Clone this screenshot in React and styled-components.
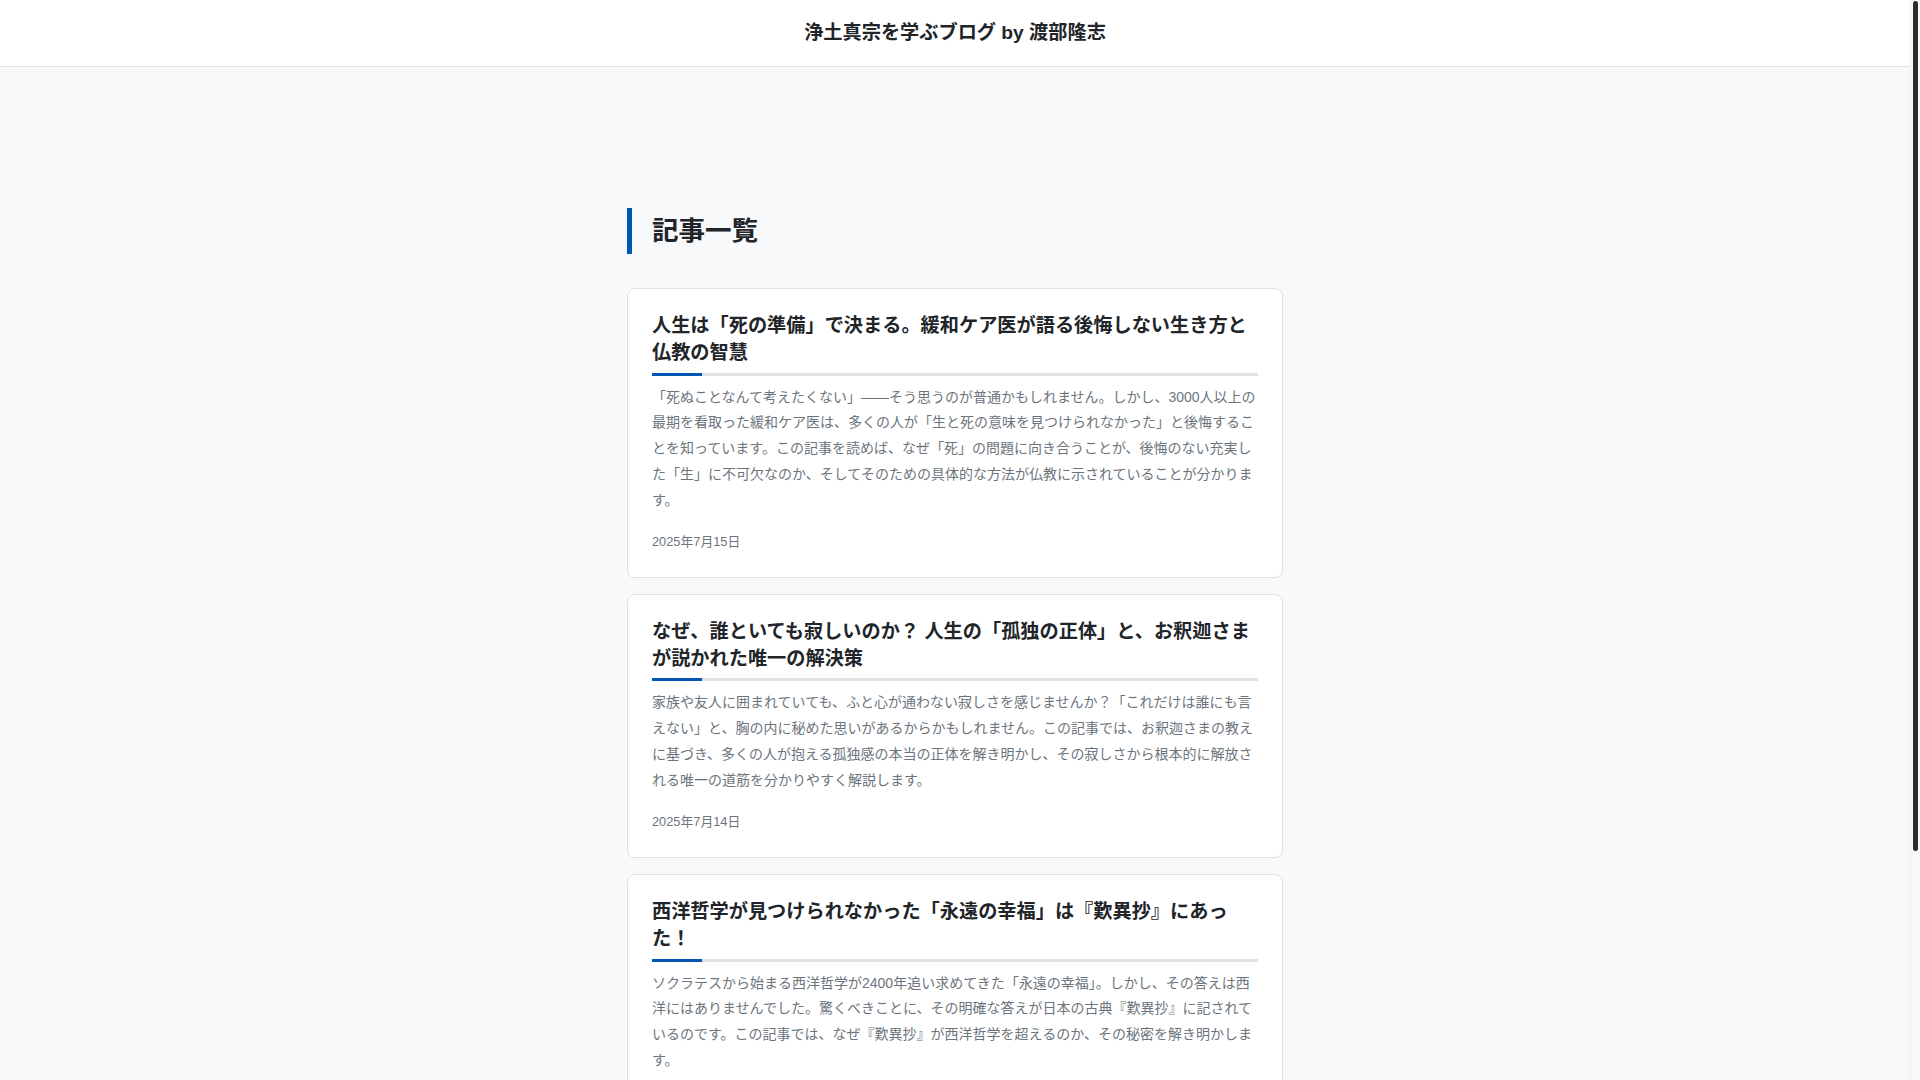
import React from "react";
import styled, { createGlobalStyle } from "styled-components";

const GlobalStyle = createGlobalStyle`
  html, body {
    margin: 0;
    padding: 0;
  }
  body {
    background: #f8f9fa;
    color: #212529;
    font-family: "Liberation Sans", "Noto Sans CJK JP", sans-serif;
  }
`;

const Page = styled.div`
  margin-right: 10px;
`;

const ScrollRail = styled.div`
  position: fixed;
  top: 0;
  right: 0;
  width: 10px;
  height: 100vh;
  background: #fafafa;
  border-left: 1px solid #ececec;
  box-sizing: border-box;
`;

const ScrollThumb = styled.div`
  margin: 1px 0 0 2px;
  width: 5px;
  height: 850px;
  border-radius: 3px;
  background: #2b2b2b;
`;

const Header = styled.header`
  background: #ffffff;
  border-bottom: 1px solid #dee2e6;
  padding: 16px 0;
  text-align: center;
`;

const SiteTitle = styled.h1`
  margin: 0;
  font-size: 19.2px;
  line-height: 34px;
  font-weight: 700;
  color: #212529;
`;

const Main = styled.main`
  width: 656px;
  margin: 0 auto;
  padding: 141px 0 120px;
`;

const SectionHeading = styled.h2`
  margin: 0 0 34px;
  border-left: 5px solid #0056b3;
  padding-left: 20px;
  font-size: 26.5px;
  line-height: 46px;
  font-weight: 700;
  color: #212529;
`;

const List = styled.div`
  display: flex;
  flex-direction: column;
  gap: 16px;
`;

const Card = styled.article`
  background: #ffffff;
  border: 1px solid #dee2e6;
  border-radius: 8px;
  padding: 24px;
`;

const CardTitle = styled.h3`
  position: relative;
  margin: 0 0 9px;
  padding-bottom: 6px;
  border-bottom: 3px solid #dee2e6;
  font-size: 19.2px;
  line-height: 1.4;
  font-weight: 700;
  color: #212529;

  &::after {
    content: "";
    position: absolute;
    left: 0;
    bottom: -3px;
    width: 50px;
    height: 3px;
    background: #0056b3;
  }
`;

const Excerpt = styled.p`
  margin: 0 0 19px;
  font-size: 14px;
  line-height: 25.7px;
  color: #6c757d;
`;

const DateText = styled.time`
  display: block;
  font-size: 12.8px;
  line-height: 1.6;
  color: #6c757d;
`;

const posts = [
  {
    title: "人生は「死の準備」で決まる。緩和ケア医が語る後悔しない生き方と仏教の智慧",
    excerpt:
      "「死ぬことなんて考えたくない」——そう思うのが普通かもしれません。しかし、3000人以上の最期を看取った緩和ケア医は、多くの人が「生と死の意味を見つけられなかった」と後悔することを知っています。この記事を読めば、なぜ「死」の問題に向き合うことが、後悔のない充実した「生」に不可欠なのか、そしてそのための具体的な方法が仏教に示されていることが分かります。",
    date: "2025年7月15日",
  },
  {
    title: "なぜ、誰といても寂しいのか？ 人生の「孤独の正体」と、お釈迦さまが説かれた唯一の解決策",
    excerpt:
      "家族や友人に囲まれていても、ふと心が通わない寂しさを感じませんか？「これだけは誰にも言えない」と、胸の内に秘めた思いがあるからかもしれません。この記事では、お釈迦さまの教えに基づき、多くの人が抱える孤独感の本当の正体を解き明かし、その寂しさから根本的に解放される唯一の道筋を分かりやすく解説します。",
    date: "2025年7月14日",
  },
  {
    title: "西洋哲学が見つけられなかった「永遠の幸福」は『歎異抄』にあった！",
    excerpt:
      "ソクラテスから始まる西洋哲学が2400年追い求めてきた「永遠の幸福」。しかし、その答えは西洋にはありませんでした。驚くべきことに、その明確な答えが日本の古典『歎異抄』に記されているのです。この記事では、なぜ『歎異抄』が西洋哲学を超えるのか、その秘密を解き明かします。",
    date: "2025年7月13日",
  },
];

export default function App() {
  return (
    <>
      <GlobalStyle />
      <Page>
        <Header>
          <SiteTitle>浄土真宗を学ぶブログ by 渡部隆志</SiteTitle>
        </Header>
        <Main>
          <SectionHeading>記事一覧</SectionHeading>
          <List>
            {posts.map((p) => (
              <Card key={p.date}>
                <CardTitle>{p.title}</CardTitle>
                <Excerpt>{p.excerpt}</Excerpt>
                <DateText>{p.date}</DateText>
              </Card>
            ))}
          </List>
        </Main>
      </Page>
      <ScrollRail aria-hidden="true">
        <ScrollThumb />
      </ScrollRail>
    </>
  );
}
